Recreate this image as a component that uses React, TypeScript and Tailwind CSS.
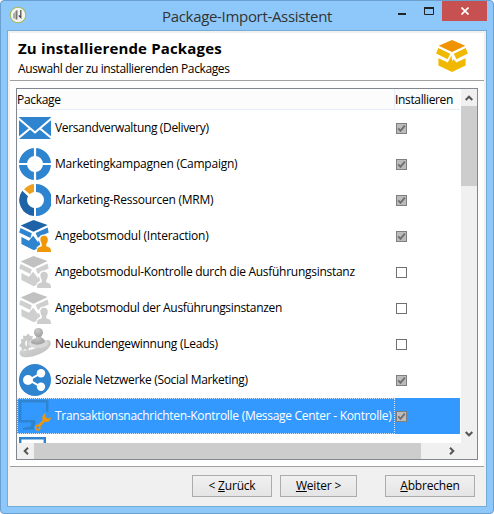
import React from "react";

type IconProps = { className?: string };

function Envelope() {
  return (
    <svg className="shrink-0" width="32" height="32" viewBox="0 0 32 32">
      <rect y="5" width="32" height="22" fill="#2f84d0" />
      <path d="M-1 6 L16 20.5 L33 6 M-1 26.5 L11 16.5 M33 26.5 L21 16.5" fill="none" stroke="#fff" strokeWidth="2" />
    </svg>
  );
}

function Ring() {
  return (
    <svg className="shrink-0" width="32" height="32" viewBox="0 0 32 32">
      <circle cx="16" cy="16" r="12" fill="none" stroke="#2f84d0" strokeWidth="8" />
      <path d="M16 0V32M0 16H32" stroke="#fff" strokeWidth="2.2" />
    </svg>
  );
}

function Donut() {
  return (
    <svg className="shrink-0" width="32" height="32" viewBox="0 0 32 32">
      <path d="M17 0A16 16 0 0 1 17 32V24A8 8 0 0 0 17 8Z" fill="#2f84d0" />
      <path d="M15 32A16 16 0 0 1 3.3 6.7L9 12.3A8 8 0 0 0 15 24Z" fill="#1e62a8" />
      <path d="M5 5.2A16 16 0 0 1 15 0V8A8 8 0 0 0 10.8 10.3Z" fill="#f0a021" />
    </svg>
  );
}

function Cube({ top, side }: { top: string; side: string }) {
  return (
    <g>
      <path d="M16 0L29.3 5.8L16 12L2.7 5.8Z" fill={top} />
      <path
        d="M2.3 7.9L14.2 13.8L11.6 19.2L0.1 13.4ZM29.7 7.9L17.8 13.8L20.4 19.2L31.9 13.4ZM2.4 18.2L11.8 22.6L15.4 15.6L16.3 21.2L17.6 19L20.2 22.6L29.6 18.2V25.4L16 32L2.4 25.4Z"
        fill={side}
      />
    </g>
  );
}

function Offer({ top, side, person }: { top: string; side: string; person: string }) {
  return (
    <svg className="shrink-0" width="32" height="32" viewBox="0 0 32 32">
      <path d="M14.5 0L28.6 5L14.5 11.7L1.7 5.5Z" fill={top} />
      <path
        d="M1.6 8L12.8 13.2L11.4 18L0.2 12.6ZM28.6 7.5L16.6 13L18.7 17.8L20.3 17.2Q21 14.7 25 14.4L29.7 12.4ZM2.4 17L9.8 20.7L14.2 15.8L19 22.2L19.8 20.2L21.3 24.4L17.7 27.2V28.7L14.8 30.2L2.4 24Z"
        fill={side}
      />
      <path
        d="M25 15.8C22.4 15.8 21 17.4 21.4 20C21.6 22 22.6 23 22.8 24V26.3L19.5 27.5Q18 28 18 32H32Q32 28 30.4 27.5L27.3 26.3V24C28 23 28.7 22 28.8 20C29.1 17.4 27.6 15.8 25 15.8Z"
        fill={person}
      />
    </svg>
  );
}

function Leads() {
  return (
    <svg className="shrink-0" width="32" height="32" viewBox="0 0 32 32">
      <defs>
        <linearGradient id="leadBase" x1="0" y1="0" x2="1" y2="1">
          <stop offset="0" stopColor="#dadada" />
          <stop offset="1" stopColor="#bdbdbd" />
        </linearGradient>
        <radialGradient id="leadHead" cx=".4" cy=".3" r=".8">
          <stop offset="0" stopColor="#cbcbcb" />
          <stop offset="1" stopColor="#9b9b9b" />
        </radialGradient>
      </defs>
      <path d="M2 22C7 24 23 20 27 12.5C31 11 33 14 31 18C27 26 7 32 2 28C0 26 0 24 2 22Z" fill="url(#leadBase)" />
      <path d="M4 7.5L7 8L9 5.6L11.5 8L14 8.3L13 12L14 19L10 20L9 23L6 21L3 23L2.5 19.5L0 18L2.4 14.5L1.8 11L4.3 11Z" fill="#c9c9c9" />
      <path d="M8 12C5.5 13 5 17 8 18.5Z" fill="#f5f5f5" />
      <ellipse cx="19" cy="15.5" rx="10" ry="4.5" fill="#d9d9d9" />
      <path d="M17 7V10Q12 11 12 15Q19 19 26 14Q26 11 22.4 9.5L22 6Z" fill="url(#leadHead)" />
      <circle cx="19.5" cy="4.5" r="4.5" fill="url(#leadHead)" />
    </svg>
  );
}

function Share() {
  return (
    <svg className="shrink-0" width="32" height="32" viewBox="0 0 32 32">
      <circle cx="16" cy="16" r="16" fill="#2f84d0" />
      <path d="M21.5 9.4L10 16L21.5 22.6" fill="none" stroke="#fff" strokeWidth="2" />
      <circle cx="9" cy="16" r="5" fill="#fff" />
      <circle cx="22" cy="9.3" r="4.2" fill="#fff" />
      <circle cx="22" cy="22.7" r="4.2" fill="#fff" />
    </svg>
  );
}

function MonitorWrench() {
  return (
    <svg className="shrink-0" width="32" height="32" viewBox="0 0 32 32">
      <path d="M28.2 11.5V1.3H1.2V21.3H15.5" fill="none" stroke="#2f84d0" strokeWidth="2.4" />
      <path d="M12 21H17L15 27V29.7H4V28L12 26Z" fill="#2f84d0" />
      <path
        d="M26.8 13.2C23.5 14.2 22.7 17.3 23.8 20L19.5 24.6C17.6 24 16 25.6 16 27.5A2.9 2.9 0 1 0 21.4 26.4L25.8 21.8C29.4 22.6 31.7 20.6 32 17.2L28.7 18.7L26.3 16.4Z"
        fill="#f0960a"
      />
      <circle cx="18.8" cy="27.7" r="1.3" fill="#3399ff" />
    </svg>
  );
}

function MonitorTop() {
  return (
    <svg width="32" height="32" viewBox="0 0 32 32">
      <path d="M25.8 12V2.2H1.2V12" fill="none" stroke="#2f84d0" strokeWidth="2.4" />
    </svg>
  );
}

function CheckBox({ checked }: { checked: boolean }) {
  return checked ? (
    <span className="block h-[11px] w-[11px] border border-[#7f7f7f] bg-[#bcbcbc]">
      <svg className="block" width="9" height="9" viewBox="0 0 9 9">
        <path d="M1.2 4.4L3.5 6.8L7.8 1.6" fill="none" stroke="#707070" strokeWidth="1.9" />
      </svg>
    </span>
  ) : (
    <span className="block h-[11px] w-[11px] border border-[#707070] bg-white" />
  );
}

function Chevron({ className = "" }: IconProps) {
  return (
    <svg className={className} width="8" height="6" viewBox="0 0 8 6">
      <path d="M0.7 5L4 1.7L7.3 5" fill="none" stroke="#555" strokeWidth="2" />
    </svg>
  );
}

const grey = <Offer top="#c1c1c1" side="#cfcfcf" person="#cdcdcd" />;

const rows = [
  { icon: <Envelope />, text: "Versandverwaltung (Delivery)", on: true, track: "tracking-[-0.35px]" },
  { icon: <Ring />, text: "Marketingkampagnen (Campaign)", on: true, track: "tracking-[-0.23px]" },
  { icon: <Donut />, text: "Marketing-Ressourcen (MRM)", on: true, track: "tracking-[-0.24px]" },
  { icon: <Offer top="#1e62a8" side="#2f84d0" person="#f09609" />, text: "Angebotsmodul (Interaction)", on: true, track: "tracking-[-0.24px]" },
  { icon: grey, text: "Angebotsmodul-Kontrolle durch die Ausführungsinstanz", on: false, track: "tracking-[-0.28px]" },
  { icon: grey, text: "Angebotsmodul der Ausführungsinstanzen", on: false, track: "tracking-[-0.33px]" },
  { icon: <Leads />, text: "Neukundengewinnung (Leads)", on: false, track: "tracking-[-0.28px]" },
  { icon: <Share />, text: "Soziale Netzwerke (Social Marketing)", on: true, track: "tracking-[-0.31px]" },
  { icon: <MonitorWrench />, text: "Transaktionsnachrichten-Kontrolle (Message Center - Kontrolle)", on: true, selected: true, track: "tracking-[-0.29px]" },
];

function TitleBar() {
  return (
    <div className="flex h-[29px] shrink-0 items-start">
      <svg className="ml-0.5 mt-[5px] shrink-0" width="18" height="18" viewBox="0 0 18 18">
        <circle cx="9" cy="9" r="7.8" fill="#f4f4f2" stroke="#a0ba60" strokeWidth="1.1" />
        <path d="M4.2 8L5.8 6V12.5H4.2Z" fill="#999" />
        <path d="M6.5 5L8.5 4V13.5H6.5Z" fill="#777" />
        <path d="M11.8 4V11.5L9.8 9.5" stroke="#444" strokeWidth="1.2" fill="none" />
      </svg>
      <div className="ml-[135px] w-[200px] shrink-0 whitespace-nowrap pt-1 text-[15px] leading-[23px] tracking-[-0.32px] text-[#333]">
        Package-Import-Assistent
      </div>
      <svg className="ml-[36px] mt-1.5 shrink-0" width="38" height="12" viewBox="0 0 38 12">
        <rect x="0" y="6" width="8" height="2" fill="#222" />
        <path d="M26.5 1.5H35.5V7.5H26.5Z" fill="none" stroke="#222" />
        <path d="M26 1H36" stroke="#222" strokeWidth="2" />
      </svg>
      <div className="ml-[6px] flex h-5 w-[45px] shrink-0 items-center justify-center bg-[#c75050]">
        <svg width="8" height="8" viewBox="0 0 8 8">
          <path d="M0.5 0.5L7.5 7.5M7.5 0.5L0.5 7.5" stroke="#fff" strokeWidth="1.7" />
        </svg>
      </div>
    </div>
  );
}

function PackageTable() {
  return (
    <div className="flex h-[372px] w-[462px] flex-col border border-[#828790] bg-white">
      <div className="flex h-[354px]">
        <div className="w-[444px] overflow-hidden">
          <div className="flex h-[21px] w-[443px] border-b border-[#e5effa] bg-[#fcfcfc] leading-[22px]">
            <div className="w-[378px] border-r border-[#e5effa] tracking-[-0.3px]">Package</div>
            <div className="tracking-[-0.35px]">Installieren</div>
          </div>
          {rows.map((r) => (
            <div key={r.text} className={"flex h-9 w-[443px] " + (r.selected ? "bg-[#3399ff] text-white" : "")}>
              <div
                className={
                  "flex w-[378px] shrink-0 items-center border border-dotted pl-px " +
                  (r.selected ? "border-[#d5e8fb]" : "border-transparent")
                }
              >
                {r.icon}
                <span className={"ml-1 whitespace-nowrap leading-4 " + r.track}>{r.text}</span>
              </div>
              <div className="pl-px pt-[13px]">
                <CheckBox checked={r.on} />
              </div>
            </div>
          ))}
          <div className="pl-0.5 pt-0.5">
            <MonitorTop />
          </div>
        </div>
        <div className="flex w-4 flex-col items-center justify-between bg-[#f0f0f0] pb-1.5">
          <div className="flex w-full flex-col items-center">
            <div className="flex h-[17px] items-center">
              <Chevron />
            </div>
            <div className="h-20 w-full bg-[#cdcdcd]" />
          </div>
          <Chevron className="rotate-180" />
        </div>
      </div>
      <div className="flex h-4 items-center bg-[#f0f0f0]">
        <div className="flex w-[17px] justify-center">
          <Chevron className="-rotate-90" />
        </div>
        <div className="h-full w-[387px] bg-[#cdcdcd]" />
        <Chevron className="ml-[27px] rotate-90" />
      </div>
    </div>
  );
}

const button =
  "flex h-[22px] items-center justify-center whitespace-pre border border-[#acacac] bg-linear-to-b from-[#f0f0f0] to-[#e5e5e5] tracking-[-0.2px] ";

export default function App() {
  return (
    <div className="h-[514px] w-[494px] bg-white font-['Open_Sans','Noto_Sans',sans-serif] text-[12px] text-black">
      <div className="flex h-full w-full flex-col rounded-[4px] border border-[#6a9fd0] bg-[#8ec8fa] px-1.5 pb-1.5">
        <TitleBar />
        <div className="flex flex-1 flex-col border border-[#74acd8] bg-[#f0f0f0]">
          <div className="mx-0.5 mt-0.5 flex h-[47px] justify-between bg-white">
            <div className="pl-2 pt-[5px]">
              <div className="whitespace-nowrap text-[15px] font-bold leading-5 tracking-[0.16px]">Zu installierende Packages</div>
              <div className="mt-px whitespace-nowrap leading-5 tracking-[-0.38px]">Auswahl der zu installierenden Packages</div>
            </div>
            <svg className="mr-4 mt-[7px] shrink-0" width="32" height="32" viewBox="0 0 32 32">
              <Cube top="#f09300" side="#f0b900" />
            </svg>
          </div>
          <div className="mx-0.5 h-[387px] border-y border-[#a0a0a0] bg-[#fefefe] pl-1.5 pt-[7px]">
            <PackageTable />
          </div>
          <div className="flex pl-[184px] pt-2">
            <button className={button + "w-20"}>{"< "}<u>Z</u>urück</button>
            <button className={button + "ml-2 w-[77px]"}><u>W</u>{"eiter >"}</button>
            <button className={button + "ml-7 w-[90px]"}><u>A</u>bbrechen</button>
          </div>
        </div>
      </div>
    </div>
  );
}
